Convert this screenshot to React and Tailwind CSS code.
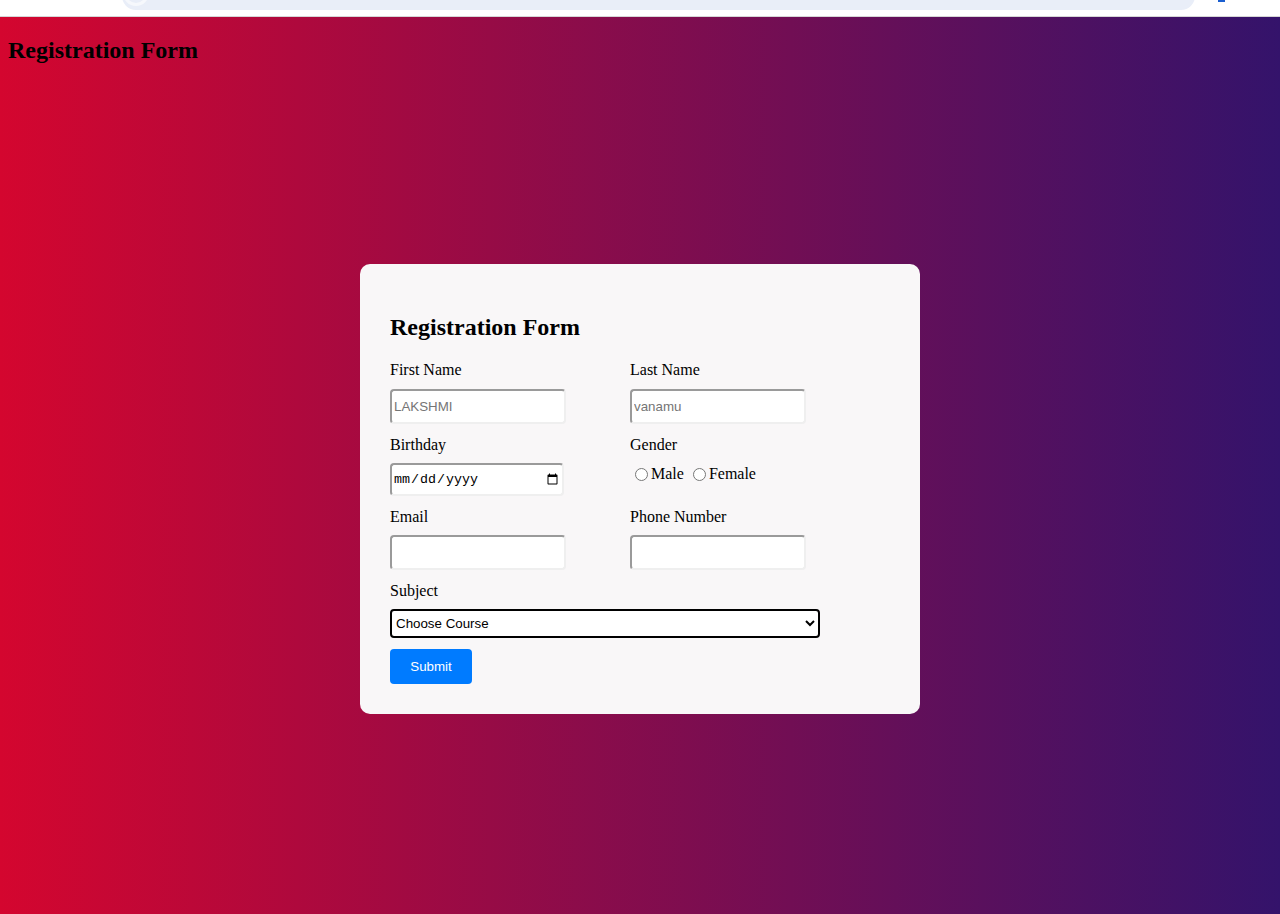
import React from "react";

const inputCls =
  "block h-[35px] w-[176px] rounded-[4px] border-2 border-t-[#9a9a9a] border-l-[#9a9a9a] border-r-[#efefef] border-b-[#efefef] bg-white px-[2px] text-[13.33px] text-black outline-none placeholder:text-[#757575] [font-family:'Liberation_Sans',Arial,sans-serif]";

function Label({ children }) {
  return <div className="h-[18px] text-[16px] leading-[20px] text-black">{children}</div>;
}

export default function App() {
  return (
    <div className="w-[1280px] h-[914px] overflow-hidden [font-family:'Liberation_Serif','Times_New_Roman',serif]">
      {/* browser strip */}
      <div className="relative h-[16px] bg-white overflow-hidden">
        <div className="ml-[122px] mt-[-20px] h-[30px] w-[1073px] rounded-[14px] bg-[#e9eef8]">
          <div className="ml-[1px] mt-[0px] h-[26px] w-[26px] rounded-full border-[3px] border-[#f6f8fc]"></div>
        </div>
        <div className="absolute left-[1218px] top-0 h-[2px] w-[7px] bg-[#1a5fd0]"></div>
      </div>
      <div className="h-[1px] bg-[#d6d6d6]"></div>
      <main className="h-[897px] bg-[linear-gradient(to_right,#d4062f,#34136b)]">
        <h2 className="pt-[19px] ml-[8px] text-[24px] leading-[28px] font-bold text-black">
          Registration Form
        </h2>
        <div className="mt-[200px] flex justify-center">
          <div className="w-[560px] h-[450px] rounded-[10px] bg-[#f9f7f8] px-[30px] pt-[30px]">
            <h2 className="mt-[19px] text-[24px] leading-[28px] font-bold text-black">
              Registration Form
            </h2>
            <div className="mt-[19px] grid grid-cols-[240px_240px]">
              <div>
                <Label>First Name</Label>
                <input className={`mt-[11px] ${inputCls}`} placeholder="LAKSHMI" />
              </div>
              <div>
                <Label>Last Name</Label>
                <input className={`mt-[11px] ${inputCls}`} placeholder="vanamu" />
              </div>
              <div className="mt-[11px]">
                <Label>Birthday</Label>
                <input
                  type="date"
                  className="mt-[10px] block h-[33px] w-[174px] rounded-[4px] border-2 border-t-[#9a9a9a] border-l-[#9a9a9a] border-r-[#efefef] border-b-[#efefef] bg-white px-[1px] text-[13.33px] text-black [font-family:'Liberation_Mono',monospace]"
                />
              </div>
              <div className="mt-[11px]">
                <Label>Gender</Label>
                <div className="mt-[12px] flex items-center text-[16px] leading-[18px] text-black">
                  <input type="radio" name="g" className="ml-[5px] mr-[3px] h-[13px] w-[13px]" />
                  <span>Male</span>
                  <input type="radio" name="g" className="ml-[9px] mr-[3px] h-[13px] w-[13px]" />
                  <span>Female</span>
                </div>
              </div>
              <div className="mt-[11px]">
                <Label>Email</Label>
                <input type="email" className={`mt-[10px] ${inputCls}`} />
              </div>
              <div className="mt-[11px]">
                <Label>Phone Number</Label>
                <input type="tel" className={`mt-[10px] ${inputCls}`} />
              </div>
            </div>
            <div className="mt-[11px]">
              <Label>Subject</Label>
              <select className="mt-[10px] block h-[29px] w-[430px] rounded-[4px] border-2 border-black bg-white pl-0 text-[13.33px] text-black [font-family:'Liberation_Sans',Arial,sans-serif]">
                <option>Choose Course</option>
              </select>
            </div>
            <button className="mt-[11px] h-[35px] w-[82px] rounded-[4px] bg-[#007bff] text-[13.33px] text-white [font-family:'Liberation_Sans',Arial,sans-serif]">
              Submit
            </button>
          </div>
        </div>
      </main>
    </div>
  );
}
